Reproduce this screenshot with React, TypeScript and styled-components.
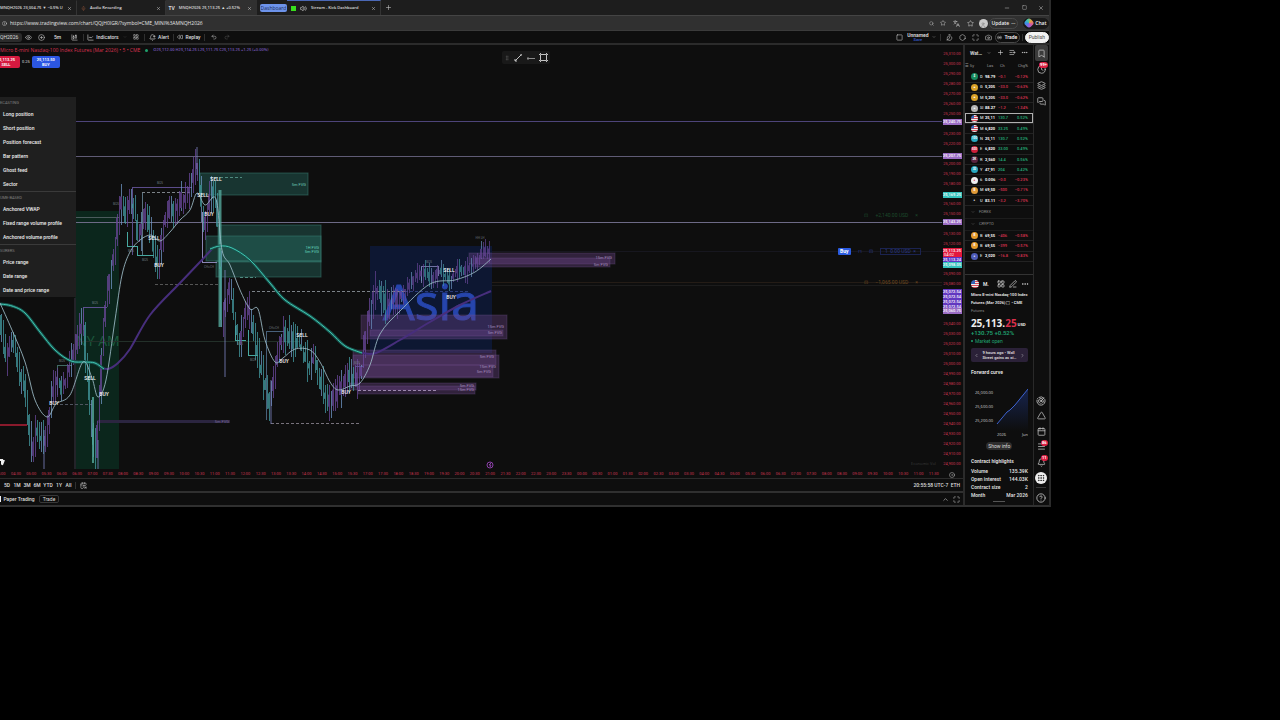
import React from "react";
import styled, { createGlobalStyle } from "styled-components";
import {
  Bell, BellPlus, Bookmark, Calendar, Camera, CalendarSync, ChartCandlestick, ChartLine, ChevronDown, ChevronLeft,
  ChevronRight, ChevronUp, Clock, CircleHelp, CirclePlus, Eye, GripVertical, Hexagon, Info, Layers, LayoutGrid,
  ListPlus, Maximize, Menu as MenuIcon, MessagesSquare, Minus, MoreHorizontal, PenLine, Plus, Radar, Radio, Redo2, Rewind, Search,
  Square, Star, TimerReset, Triangle, Undo2, User, Volume2, X, Grip, Mic, Languages, CircleDot,
} from "lucide-react";

const GlobalStyle = createGlobalStyle`
  *, *::before, *::after { box-sizing: border-box; }
  body {
    margin: 0;
    background: #000;
    color: #dedede;
    font: 5px/8px Roboto, "Liberation Sans", sans-serif;
  }
  button, input {
    margin: 0;
    padding: 0;
    border: 0;
    background: none;
    color: inherit;
    font: inherit;
  }
  svg { flex: none; display: block; }
`;

const Window = styled.main`
  width: 82.1%;
  overflow: hidden;
  background: #0e0e0e;
  border-right: 2px solid #2b2b2b;
  border-bottom: 2px solid #303030;
`;

/* Browser frame */
const TabBar = styled.header`
  display: flex;
  align-items: center;
  height: 15px;
  background: #1d1d1d;
  font-family: "Open Sans", "Liberation Sans", sans-serif;
  white-space: nowrap;
`;
const Tab = styled.div<{ $width: number; $active?: boolean; $grouped?: boolean }>`
  display: flex;
  align-items: center;
  gap: 4px;
  flex: none;
  width: ${(p) => p.$width}px;
  height: 15px;
  padding-right: 4px;
  background: ${(p) => (p.$active ? "#303030" : "transparent")};
  border-top: 1px solid ${(p) => (p.$grouped ? "#4b68b5" : "transparent")};
  border-right: 1px solid ${(p) => (p.$active ? "transparent" : "#333")};
`;
const TabTitle = styled.span`
  flex: 1;
  min-width: 0;
  font-size: 4px;
  font-weight: 600;
`;
const GroupLabel = styled.button`
  flex: none;
  width: 27px;
  height: 8px;
  margin-left: 3px;
  border-radius: 2px;
  background: #6d93ea;
  color: #1c2c58;
  line-height: 8px;
`;
const Favicon = styled.span<{ $color: string }>`
  flex: none;
  width: 5px;
  height: 5px;
  background: ${(p) => p.$color};
`;
const WindowButtons = styled.div`
  display: flex;
  align-items: center;
  margin-left: auto;
`;
const IconButton = styled.button<{ $width?: number; $dim?: boolean }>`
  display: flex;
  align-items: center;
  justify-content: center;
  flex: none;
  width: ${(p) => p.$width ?? 13}px;
  height: 12px;
  color: ${(p) => (p.$dim ? "#555" : "#c4c4c4")};
`;
const AddressBar = styled.div`
  display: flex;
  align-items: center;
  height: 16px;
  padding-left: 2px;
  background: #303030;
  border-top: 1px solid #444;
  border-bottom: 1px solid #3b3b3b;
  font-family: "Open Sans", "Liberation Sans", sans-serif;
`;
const Address = styled.input`
  flex: 1;
  min-width: 0;
  height: 10px;
  padding-left: 3px;
  outline: none;
  color: #e4e4e4;
`;
const Avatar = styled.span`
  display: flex;
  align-items: end;
  justify-content: center;
  width: 9px;
  height: 9px;
  margin: 0 1px 0 2px;
  border-radius: 50%;
  background: #c9c9c9;
  color: #777;
`;
const Pill = styled.button<{ $width: number; $tone?: "light" | "dark" | "outline" }>`
  display: flex;
  align-items: center;
  justify-content: center;
  gap: 2px;
  flex: none;
  width: ${(p) => p.$width}px;
  height: 11px;
  border: 1px solid ${(p) => (p.$tone === "light" ? "#f2f2f2" : p.$tone === "dark" ? "#191919" : "#484848")};
  border-radius: 6px;
  background: ${(p) => (p.$tone === "light" ? "#f2f2f2" : p.$tone === "dark" ? "#191919" : "transparent")};
  color: ${(p) => (p.$tone === "light" ? "#444" : "#eee")};
  font-weight: ${(p) => (p.$tone === "light" ? 400 : 600)};
  white-space: nowrap;
`;
const Copilot = styled.span`
  width: 8px;
  height: 8px;
  border-radius: 3px;
  background: conic-gradient(#e8a13b, #d95a9b, #8f63e0, #3d8be8, #3cc7b0, #e8a13b);
  transform: rotate(45deg);
`;

/* Page toolbar */
const Toolbar = styled.nav`
  display: flex;
  align-items: center;
  height: 14px;
  border-bottom: 2px solid #2b2b2b;
  white-space: nowrap;
`;
const SymbolBox = styled.button`
  width: 22px;
  height: 9px;
  background: #2b2b2b;
  border-radius: 0 3px 3px 0;
  text-align: left;
`;
const ToolButton = styled.button<{ $width: number }>`
  display: flex;
  align-items: center;
  justify-content: center;
  gap: 2px;
  flex: none;
  width: ${(p) => p.$width}px;
  height: 12px;
  font-weight: 500;
  white-space: nowrap;
`;
const Separator = styled.span`
  flex: none;
  width: 1px;
  height: 7px;
  margin: 0 2px;
  background: #303030;
`;
const Push = styled.span`
  flex: 1;
`;
const LayoutName = styled.button`
  width: 24px;
  font-weight: 600;
  line-height: 6px;
  text-align: center;
  small {
    display: block;
    color: #3558c8;
    font-size: 4px;
    line-height: 4px;
  }
`;

/* Body */
const Body = styled.div`
  display: flex;
`;
const ChartColumn = styled.section`
  display: flex;
  flex-direction: column;
  flex: 1;
  min-width: 0;
  border-right: 2px solid #2b2b2b;
`;
const ChartArea = styled.div`
  position: relative;
  display: flex;
  height: 424px;
`;
const Plot = styled.svg`
  flex: 1;
  min-width: 0;
  height: 424px;
`;
const Axis = styled.svg`
  width: 21px;
  height: 424px;
`;
const Legend = styled.div`
  position: absolute;
  top: 1px;
  left: 0;
  display: flex;
  align-items: center;
  gap: 5px;
  font-family: "Open Sans", "Liberation Sans", sans-serif;
  white-space: nowrap;
  color: #dc3351;
`;
const Dot = styled.i<{ $size: number }>`
  width: ${(p) => p.$size}px;
  height: ${(p) => p.$size}px;
  border-radius: 50%;
  background: #1fa06c;
`;
const Ohlc = styled.span`
  font-size: 4px;
  font-weight: 600;
  color: #7558bd;
`;
const TradeButtons = styled.div`
  position: absolute;
  top: 11px;
  left: -8px;
  display: flex;
  align-items: center;
  gap: 2px;
  font-size: 4px;
`;
const TradeButton = styled.button<{ $color: string }>`
  width: 28px;
  height: 12px;
  border-radius: 2px;
  background: ${(p) => p.$color};
  color: #fff;
  font-weight: 600;
  font-size: 4px;
  line-height: 5px;
  span { display: block; }
`;
const DrawingBar = styled.div`
  position: absolute;
  top: 6px;
  left: 502px;
  display: flex;
  align-items: center;
  width: 48px;
  height: 13px;
  border-radius: 2px;
  background: #191919;
`;
const OrderRow = styled.div<{ $top: number; $right: number; $color: string }>`
  position: absolute;
  top: ${(p) => p.$top}px;
  right: ${(p) => p.$right}px;
  display: flex;
  align-items: center;
  gap: 7px;
  color: ${(p) => p.$color};
`;
const BuyTag = styled.button`
  width: 13px;
  height: 7px;
  border-radius: 1px;
  background: #2b5be0;
  color: #fff;
  font-weight: 700;
  line-height: 7px;
`;
const OrderBox = styled.span`
  display: flex;
  justify-content: space-between;
  width: 41px;
  height: 7px;
  padding: 0 4px;
  border: 1px solid #1b2350;
  line-height: 5px;
`;
const Menu = styled.aside`
  position: absolute;
  top: 52px;
  left: 0;
  width: 76px;
  background: #1f1f1f;
`;
const MenuGroup = styled.div`
  & + & { border-top: 1px solid #3a3a3a; }
`;
const MenuHeading = styled.h3`
  height: 10px;
  margin: 0;
  padding-top: 2px;
  color: #808080;
  font-size: 4px;
  font-weight: 400;
`;
const MenuItem = styled.button`
  display: flex;
  align-items: center;
  width: 100%;
  height: 14px;
  padding-left: 3px;
  color: #eee;
  font-weight: 500;
  white-space: nowrap;
`;
const TimeAxis = styled.div`
  display: flex;
  height: 10px;
  overflow: hidden;
  border-bottom: 1px solid #2b2b2b;
`;
const TimeLabels = styled.div`
  display: flex;
  flex: 1;
  min-width: 0;
  margin-left: -7px;
  color: #cc3450;
  font: 4px/10px Roboto, sans-serif;
  text-align: center;
  span { flex: 1 0 0; min-width: 0; }
`;
const RangeBar = styled.div`
  display: flex;
  align-items: center;
  height: 12px;
  padding: 0 2px;
`;
const BottomBar = styled.div`
  display: flex;
  align-items: center;
  height: 14px;
  border-top: 2px solid #303030;
  padding: 0 1px;
`;
const OutlineButton = styled.button`
  width: 20px;
  height: 8px;
  margin-left: 3px;
  border: 1px solid #383838;
  border-radius: 2px;
  line-height: 6px;
`;
const BrokerMark = styled.span`
  width: 2px;
  height: 6px;
  margin: 0 1px 0 -2px;
  background: #eee;
`;

/* Side panel */
const Panel = styled.aside`
  flex: none;
  width: 69px;
  border-right: 1px solid #292929;
`;
const PanelHead = styled.div`
  display: flex;
  align-items: center;
  justify-content: space-between;
  height: 15px;
  padding: 0 5px;
  font-weight: 600;
`;
const Quotes = styled.table`
  width: 100%;
  height: 202px;
  border-collapse: collapse;
  table-layout: fixed;
  font-size: 4px;
  line-height: 8px;
  white-space: nowrap;
  td, th { padding: 0; text-align: left; }
`;
const HeadRow = styled.tr`
  height: 12px;
  color: #999;
  th { font-weight: 400; }
`;
const QuoteRow = styled.tr<{ $selected?: boolean }>`
  height: 10px;
  border-bottom: 1px solid #232323;
  outline: ${(p) => (p.$selected ? "1px solid #b0b0b0" : "none")};
  outline-offset: -1px;
  font-weight: 500;
`;
const SectionRow = styled.tr`
  height: 12px;
  color: #8a8a8a;
  border-bottom: 1px solid #1c1c1c;
`;
const SectionLabel = styled.span`
  display: flex;
  align-items: center;
  gap: 4px;
  padding-left: 6px;
`;
const Coin = styled.span<{ $color: string }>`
  display: flex;
  align-items: center;
  justify-content: center;
  width: 7px;
  height: 7px;
  margin-left: 6px;
  border-radius: 50%;
  background: ${(p) => p.$color};
  color: #fff;
  font-size: 3px;
  font-weight: 700;
  line-height: 7px;
`;
const Price = styled.td`
  color: #f4f4f4;
  font-weight: 700;
`;
const Change = styled.td<{ $up: boolean; $end?: boolean }>`
  color: ${(p) => (p.$up ? "#24b37c" : "#dd3350")};
  && {
    text-align: ${(p) => (p.$end ? "right" : "left")};
    padding-right: ${(p) => (p.$end ? 5 : 0)}px;
  }
`;
const PanelGap = styled.div`
  height: 13px;
  border-bottom: 1px solid #333;
`;
const Details = styled.div`
  padding: 3px 5px 0 6px;
`;
const DetailsHead = styled.div`
  display: flex;
  align-items: center;
  gap: 4px;
  height: 12px;
  margin-bottom: 1px;
  font-weight: 700;
`;
const Flag = styled.span<{ $size: number }>`
  display: block;
  flex: none;
  width: ${(p) => p.$size}px;
  height: ${(p) => p.$size}px;
  border-radius: 50%;
  background: linear-gradient(90deg, #3565b8 45%, transparent 45%) top / 100% 50% no-repeat,
    repeating-linear-gradient(#f0f0f0 0 1px, #d64a5a 1px 2px);
`;
const Description = styled.p`
  margin: 0;
  color: #e8e8e8;
  font-size: 4px;
  font-weight: 600;
  white-space: nowrap;
  small { display: block; color: #888; font-size: 4px; font-weight: 400; }
`;
const BigPrice = styled.div`
  display: flex;
  align-items: end;
  margin-top: 2px;
  font: 700 10px/12px "Open Sans", sans-serif;
  color: #eee;
  em { font-style: normal; color: #d92f4b; }
  small { margin-left: 1px; font-size: 4px; line-height: 8px; }
`;
const Positive = styled.div<{ $strong?: boolean }>`
  display: flex;
  align-items: center;
  gap: 2px;
  height: ${(p) => (p.$strong ? 8 : 7)}px;
  color: #20a06f;
  font-size: ${(p) => (p.$strong ? 6 : 5)}px;
  font-weight: ${(p) => (p.$strong ? 600 : 400)};
`;
const NewsCard = styled.div`
  display: flex;
  align-items: center;
  justify-content: space-between;
  height: 14px;
  margin: 4px 0 6px;
  padding: 0 3px;
  border-radius: 2px;
  background: #2b2138;
  font-size: 4px;
  font-weight: 600;
  line-height: 5px;
  white-space: nowrap;
`;
const Subtitle = styled.h2`
  margin: 0;
  font-size: 5px;
  font-weight: 700;
  line-height: 8px;
  white-space: nowrap;
`;
const Curve = styled.svg`
  width: 100%;
  height: 64px;
`;
const InfoButton = styled.button`
  display: block;
  width: 26px;
  height: 8px;
  margin: 2px auto 7px;
  border-radius: 4px;
  background: #2e2e2e;
  line-height: 8px;
`;
const Facts = styled.dl`
  display: grid;
  grid-template-columns: 1fr auto;
  margin: 2px 0 0;
  font-weight: 600;
  white-space: nowrap;
  dt, dd { margin: 0; }
  dd { text-align: right; }
`;
const Handle = styled.div`
  width: 12px;
  height: 1px;
  margin: 2px auto 0;
  background: #555;
`;

/* Icon rail */
const Rail = styled.nav`
  display: flex;
  flex-direction: column;
  align-items: center;
  flex: none;
  width: 15px;
`;
const RailButton = styled.button<{ $active?: boolean; $tall?: boolean }>`
  position: relative;
  display: flex;
  align-items: center;
  justify-content: center;
  flex: none;
  width: 13px;
  height: ${(p) => (p.$tall ? 16 : 15)}px;
  border-radius: 2px;
  background: ${(p) => (p.$active ? "#3b3b3b" : "transparent")};
  color: #c4c4c4;
`;
const Badge = styled.span`
  position: absolute;
  top: 1px;
  right: 0;
  min-width: 7px;
  height: 6px;
  padding: 0 1px;
  border-radius: 3px;
  background: #dc1f43;
  color: #fff;
  font-size: 4px;
  font-weight: 700;
  line-height: 6px;
`;
const Apps = styled.span`
  display: flex;
  align-items: center;
  justify-content: center;
  width: 12px;
  height: 12px;
  border-radius: 50%;
  background: #eee;
  color: #111;
`;
const RailRule = styled.span`
  width: 10px;
  height: 1px;
  margin: 2px 0;
  background: #383838;
`;

type Point = [number, number];

const PRICE: Point[] = [
  [0, 315], [3, 345], [7, 360], [12, 340], [16, 355], [20, 375], [25, 385], [28, 415], [32, 455], [36, 430], [42, 440],
  [45, 445], [48, 425], [52, 395], [57, 378], [62, 390], [66, 380], [70, 365], [75, 350], [80, 330], [84, 325], [86, 360],
  [89, 385], [92, 430], [96, 458], [98, 425], [101, 380], [103, 330], [106, 305], [110, 275], [115, 250], [118, 218],
  [122, 198], [126, 220], [130, 200], [135, 210], [138, 240], [141, 230], [145, 212], [150, 225], [154, 250], [158, 265],
  [162, 235], [166, 215], [170, 207], [175, 212], [180, 200], [185, 200], [190, 188], [195, 168], [198, 165], [201, 195],
  [204, 230], [207, 210], [212, 190], [216, 200], [219, 240], [222, 320], [226, 300], [230, 285], [235, 320], [240, 345],
  [245, 310], [250, 310], [255, 340], [260, 365], [265, 385], [270, 405], [275, 370], [280, 345], [283, 333], [290, 338],
  [300, 345], [305, 357], [310, 368], [315, 355], [320, 380], [327, 402], [333, 398], [340, 390], [348, 375], [355, 382],
  [361, 375], [364, 350], [367, 322], [371, 310], [374, 292], [379, 290], [385, 303], [392, 302], [400, 296], [410, 285],
  [417, 275], [425, 272], [432, 280], [440, 270], [450, 281], [458, 268], [465, 271], [475, 264], [482, 252], [491, 251],
];

const interpolate = (points: Point[], x: number) => {
  const i = Math.max(1, points.findIndex((p) => p[0] >= x));
  const [x0, y0] = points[i - 1];
  const [x1, y1] = points[i];
  return y0 + ((y1 - y0) * (x - x0)) / (x1 - x0);
};

/* Repeatable noise, so that the candles keep their shape on each render. */
const noise = (n: number) => {
  const v = Math.sin(n * 127.1) * 43758.5453;
  return v - Math.floor(v);
};

const CANDLES = Array.from({ length: 245 }, (_, i) => {
  const x = 1 + i * 2;
  const open = interpolate(PRICE, x - 1);
  const close = interpolate(PRICE, Math.min(491, x + 1));
  const calm = x > 400 ? 0.6 : 1;
  const body = (4 + noise(i + 3) * 14) * calm;
  const mid = (open + close) / 2;
  const half = Math.max(body, Math.abs(close - open)) / 2;
  return {
    x,
    top: mid - half,
    bottom: mid + half,
    high: mid - half - noise(i + 40) * 16 * calm,
    low: mid + half + noise(i + 90) * 16 * calm,
    down: close > open,
  };
});

const smooth = (p: Point[]) => {
  let d = `M${p[0][0]} ${p[0][1]}`;
  for (let i = 0; i < p.length - 1; i++) {
    const a = p[Math.max(0, i - 1)];
    const b = p[i];
    const c = p[i + 1];
    const e = p[Math.min(p.length - 1, i + 2)];
    d += ` C${b[0] + (c[0] - a[0]) / 6} ${b[1] + (c[1] - a[1]) / 6} ${c[0] - (e[0] - b[0]) / 6} ${c[1] - (e[1] - b[1]) / 6} ${c[0]} ${c[1]}`;
  }
  return d;
};

const FAST = smooth([
  [0, 303], [12, 330], [25, 362], [35, 400], [47, 417], [56, 404], [70, 395], [83, 362], [92, 378], [98, 397], [106, 380],
  [115, 320], [122, 275], [130, 252], [140, 240], [151, 235], [160, 241], [170, 232], [180, 220], [190, 210], [197, 193],
  [205, 205], [216, 199], [222, 250], [230, 265], [240, 290], [250, 309], [258, 309], [265, 340], [275, 362], [283, 358],
  [295, 349], [310, 350], [320, 362], [330, 382], [338, 390], [350, 386], [360, 383], [370, 365], [380, 334], [400, 311],
  [430, 284], [455, 280], [475, 272], [491, 259],
]);
const SLOW_TEAL = [
  smooth([[0, 304], [12, 306], [25, 313], [40, 332], [55, 350], [71, 361], [85, 362], [95, 363], [104, 369]]),
  smooth([[210, 249], [220, 246], [232, 248], [250, 260], [270, 283], [285, 300], [310, 316], [330, 332], [345, 346], [362, 353]]),
];
const SLOW_PURPLE = [
  smooth([[100, 367], [108, 369], [118, 363], [130, 349], [150, 315], [180, 283], [200, 262], [212, 249]]),
  smooth([[362, 353], [376, 353], [400, 340], [430, 322], [460, 305], [491, 291]]),
];

const GAPS_TEAL = [
  { x: 200, y: 173, w: 108, h: 22, o: 0.36 },
  { x: 218, y: 225, w: 103, h: 37, o: 0.34 },
  { x: 206, y: 236, w: 115, h: 25, o: 0.34 },
  { x: 216, y: 261, w: 105, h: 16, o: 0.36 },
];
const GAPS_PURPLE = [
  { x: 469, y: 253, w: 146, h: 11 },
  { x: 475, y: 258, w: 135, h: 9 },
  { x: 361, y: 315, w: 146, h: 24 },
  { x: 370, y: 330, w: 133, h: 6 },
  { x: 353, y: 350, w: 143, h: 15 },
  { x: 353, y: 355, w: 146, h: 23 },
  { x: 361, y: 365, w: 132, h: 12 },
  { x: 350, y: 383, w: 126, h: 7 },
  { x: 358, y: 386, w: 117, h: 8 },
];
const GAP_NOTES: [number, number, string, string][] = [
  [306, 186, "5m FVG", "#6fc9ba"], [319, 249, "1H FVG", "#63d3be"], [319, 253, "5m FVG", "#63d3be"],
  [612, 259, "15m FVG", "#a58cbe"], [608, 266, "5m FVG", "#a58cbe"], [504, 328, "15m FVG", "#a58cbe"],
  [502, 334, "5m FVG", "#a58cbe"], [494, 358, "5m FVG", "#a58cbe"], [496, 368, "15m FVG", "#a58cbe"],
  [491, 373, "5m FVG", "#a58cbe"], [474, 387, "5m FVG", "#a58cbe"], [474, 391, "15m FVG", "#a58cbe"],
  [229, 423, "5m FVG", "#7c6a9c"],
];
const SIGNALS: [number, number, string][] = [
  [216, 181, "SELL"], [203, 197, "SELL"], [209, 216, "BUY"], [154, 240, "SELL"], [159, 267, "BUY"], [90, 380, "SELL"],
  [104, 396, "BUY"], [54, 405, "BUY"], [302, 337, "SELL"], [284, 363, "BUY"], [346, 394, "BUY"], [449, 272, "SELL"],
  [451, 299, "BUY"],
];
const STRUCTURE: [string, string][] = [
  ["M132 255V187H192", "#5b4c8a"], ["M142 255V192", "#5a7280"], ["M127 232V246H137", "#47a8a0"], ["M137 246V255H154", "#47a8a0"],
  ["M202 212V262H217", "#8b86b5"], ["M83 330V307H107", "#5d5190"], ["M57 395V365H72", "#3f6a62"], ["M235 326V340H246", "#47a8a0"],
  ["M248 330V355H258", "#47a8a0"], ["M266 420V331H284", "#47607a"], ["M421 283V266H438V276", "#6f70a0"], ["M355 385V366H364", "#5d5190"],
];

const Drawing = () => (
  <Plot role="img" aria-label="Price chart">
    <g transform="translate(0 -45)" fontFamily="Open Sans, sans-serif">
      <rect x="75" y="211" width="44" height="258" fill="#0b261c" />
      <rect x="370" y="246" width="122" height="107" fill="#0d1732" />
      <text x="98" y="346" textAnchor="middle" fontSize="14" fill="#1c5a3e">NY AM</text>
      <text x="431" y="320" textAnchor="middle" fontSize="50" fill="#2645ac" stroke="#2645ac">Asia</text>
      <g shapeRendering="crispEdges">
        <line x1="76" x2="100%" y1="121" y2="121" stroke="#4d4479" />
        <line x1="76" x2="100%" y1="156" y2="156" stroke="#5f5b75" />
        <line x1="76" x2="100%" y1="222" y2="222" stroke="#6d6a86" />
        <line x1="76" x2="119" y1="217" y2="217" stroke="#4b5a5c" />
        <line x1="492" x2="100%" y1="251" y2="251" stroke="#17171f" />
        <line x1="492" x2="100%" y1="282" y2="282" stroke="#241c16" />
        <line x1="492" x2="100%" y1="285" y2="285" stroke="#1c1c1c" />
        <line x1="76" x2="300" y1="341" y2="341" stroke="#233029" />
        <rect x="0" y="424" width="27" height="2" fill="#8a1a2c" />
        <rect x="97" y="420" width="133" height="3" fill="#2b2540" />
        <rect x="74" y="298" width="2" height="171" fill="#232329" />
      </g>
      {GAPS_TEAL.map((g, i) => (
        <rect key={i} x={g.x} y={g.y} width={g.w} height={g.h} fill="#2d7d72" fillOpacity={g.o} stroke="#3a8076" strokeOpacity="0.5" />
      ))}
      {GAPS_PURPLE.map((g, i) => (
        <rect key={i} x={g.x} y={g.y} width={g.w} height={g.h} fill="#6b4488" fillOpacity="0.38" stroke="#7f60a0" strokeOpacity="0.25" />
      ))}
      <g fill="none" shapeRendering="crispEdges">
        {STRUCTURE.map(([d, color], i) => <path key={i} d={d} stroke={color} />)}
      </g>
      <g fill="none" stroke="#7c8288" strokeDasharray="3 2" shapeRendering="crispEdges">
        <path d="M142 192H190" />
        <path d="M210 177H242" stroke="#4f8a80" />
        <path d="M155 284H218" stroke="#555" />
        <path d="M252 291H405" />
        <path d="M405 291H470" stroke="#2c3c78" />
        <path d="M271 423H360" stroke="#77727c" />
        <path d="M60 404H92" stroke="#4e5560" />
        <path d="M358 390H436" stroke="#9b86ad" />
        <path d="M240 277H256" stroke="#4f8a80" />
      </g>
      {CANDLES.map((c, i) => {
        const color = c.down ? "#449ca2" : "#6b489c";
        return (
          <g key={i} stroke={i % 5 === 0 ? "#6f97c6" : color} fill={color} opacity={c.x > 370 ? 0.65 : 0.75}>
            <line x1={c.x} x2={c.x} y1={c.high} y2={c.low} strokeWidth="1" shapeRendering="crispEdges" />
            {i % 2 === 0 && <rect x={c.x - 1} y={c.top} width="2" height={c.bottom - c.top} stroke="none" />}
          </g>
        );
      })}
      <g stroke="#54a89c" strokeWidth="3" opacity="0.8">
        <path d="M220 190V327" />
        <path d="M93 397V463" strokeWidth="2" />
      </g>
      <g stroke="#7c84c4" opacity="0.8">
        <path d="M197 147V175M44 430V469M98 440V469M225 270V377M271 380V424" />
      </g>
      {SLOW_PURPLE.map((d, i) => <path key={i} d={d} fill="none" stroke="#472e7c" strokeWidth="2" />)}
      {SLOW_TEAL.map((d, i) => (
        <g key={i} fill="none">
          <path d={d} stroke="#17564f" strokeWidth="3" />
          <path d={d} stroke="#43c9b4" strokeWidth="1" />
        </g>
      ))}
      <path d={FAST} fill="none" stroke="#9dbcc8" strokeWidth="1" opacity="0.85" />
      <g fontFamily="Roboto, sans-serif" fontSize="4" textAnchor="end">
        {GAP_NOTES.map(([x, y, text, color], i) => <text key={i} x={x} y={y} fill={color}>{text}</text>)}
      </g>
      <g fontFamily="Roboto, sans-serif" fontSize="5" fontWeight="500" textAnchor="middle" fill="#f6f6f6">
        {SIGNALS.map(([x, y, text], i) => <text key={i} x={x} y={y}>{text}</text>)}
      </g>
      <g fontSize="3" textAnchor="middle" fill="#77808a">
        <text x="160" y="184">BOS</text><text x="116" y="205">BOS</text><text x="145" y="261">BOS</text>
        <text x="209" y="268">CHoCH</text><text x="131" y="252">BOS</text><text x="95" y="304">BOS</text>
        <text x="62" y="362">BOS</text><text x="240" y="345">BOS</text><text x="253" y="361">BOS</text>
        <text x="274" y="329">CHoCH</text><text x="429" y="263">BOS</text><text x="357" y="364">BOS</text>
        <text x="480" y="239">HH LH</text>
      </g>
      <g fill="none" stroke="#8a3fa8">
        <circle cx="490" cy="465" r="3" />
        <path d="M491 463l-2 2h2l-1 2" />
      </g>
      <path d="M0 460h2v4M2 465l2-5" fill="none" stroke="#eee" strokeWidth="2" />
      <svg x="100%" y="0" overflow="visible">
        <text x="-6" y="465" fontSize="4" textAnchor="end" fill="#3a3a3a">Economic   Vol</text>
      </svg>
    </g>
  </Plot>
);

const AXIS_VALUES = Array.from({ length: 42 }, (_, i) => ({
  y: 55 + i * 10,
  text: (25310 - i * 10).toLocaleString("en-US") + ".00",
}));
const AXIS_TAGS = [
  { y: 119, h: 6, text: "25,240.75", fill: "#9a6cc4" },
  { y: 153, h: 6, text: "25,207.75", fill: "#9a6cc4" },
  { y: 192, h: 6, text: "25,169.25", fill: "#35c3bd" },
  { y: 219, h: 6, text: "25,143.25", fill: "#9a6cc4" },
  { y: 248, h: 10, text: "25,113.25", fill: "#e3173c" },
  { y: 257, h: 5, text: "25,113.24", fill: "#5b34c4" },
  { y: 262, h: 6, text: "25,098.05", fill: "#35c3bd" },
  { y: 289, h: 5, text: "25,072.54", fill: "#6238c0" },
  { y: 294, h: 5, text: "25,072.54", fill: "#6238c0" },
  { y: 299, h: 5, text: "25,072.54", fill: "#6238c0" },
  { y: 304, h: 5, text: "25,072.54", fill: "#6238c0" },
  { y: 308, h: 6, text: "25,060.75", fill: "#9a6cc4" },
];

const PriceAxis = () => (
  <Axis aria-label="Price scale">
    <g transform="translate(0 -45)" fontFamily="Roboto, sans-serif" fontSize="4" textAnchor="middle">
      {AXIS_VALUES.filter((v) => !AXIS_TAGS.some((t) => v.y > t.y - 1 && v.y - 4 < t.y + t.h)).map((v) => (
        <text key={v.y} x="10" y={v.y} fill="#cc3450">{v.text}</text>
      ))}
      {AXIS_TAGS.map((t) => (
        <g key={t.y}>
          <rect x="1" y={t.y} width="19" height={t.h} fill={t.fill} />
          <text x="10" y={t.y + 4} fill="#fff" fontWeight="500">{t.text}</text>
        </g>
      ))}
      <text x="7" y="256" fill="#fff">04:02</text>
    </g>
  </Axis>
);

const TIMES = Array.from({ length: 62 }, (_, i) => {
  const minutes = (240 + i * 30 + (i >= 24 ? 60 : 0)) % 1440;
  return `${String(Math.floor(minutes / 60)).padStart(2, "0")}:${minutes % 60 ? "30" : "00"}`;
});

const MENU = [
  { heading: "ECASTING", items: ["Long position", "Short position", "Position forecast", "Bar pattern", "Ghost feed", "Sector"] },
  { heading: "UME-BASED", items: ["Anchored VWAP", "Fixed range volume profile", "Anchored volume profile"] },
  { heading: "SURERS", items: ["Price range", "Date range", "Date and price range"] },
];

type Quote = { mark: string; color: string; name: string; price: string; change: string; percent: string; flag?: boolean };
const q = (mark: string, color: string, name: string, price: string, change: string, percent: string, flag = false): Quote =>
  ({ mark, color, name, price, change, percent, flag });

const MAIN: Quote[] = [
  q("$", "#168a5e", "D", "98.79", "−0.1", "−0.12%"),
  q("▲", "#d9a128", "G", "5,205", "−33.0", "−0.63%"),
  q("▲", "#d9a128", "M", "5,205", "−33.0", "−0.62%"),
  q("▲", "#b5b5b5", "SI", "88.27", "−1.2", "−1.34%"),
  q("", "#fff", "M", "25,11", "130.7", "0.52%", true),
  q("", "#fff", "M", "6,820", "33.25", "0.49%", true),
  q("100", "#28a8c0", "N", "25,11", "130.7", "0.52%"),
  q("500", "#cf1f3a", "E", "6,820", "33.00", "0.49%"),
  q("2K", "#5a2440", "R", "2,560", "14.4", "0.56%"),
  q("30", "#28a8c0", "Y", "47,91", "204", "0.42%"),
  q("●", "#f0f0f0", "6", "0.006", "−0.0", "−0.23%"),
  q("B", "#e09a38", "M", "69,50", "−500", "−0.71%"),
  q("♦", "#111", "U", "83.11", "−3.2", "−3.70%"),
];
const CRYPTO: Quote[] = [
  q("B", "#e59a2c", "B", "69,55", "−406", "−0.58%"),
  q("B", "#e59a2c", "B", "69,55", "−399", "−0.57%"),
  q("♦", "#4e5cb8", "E", "2,020", "−16.8", "−0.83%"),
];

const QuoteLine = ({ quote, selected }: { quote: Quote; selected?: boolean }) => {
  const up = !quote.percent.startsWith("−");
  return (
    <QuoteRow $selected={selected}>
      <td>{quote.flag ? <Coin $color="transparent"><Flag $size={7} /></Coin> : <Coin $color={quote.color} style={{ color: quote.mark === "●" ? "#d02440" : undefined }}>{quote.mark}</Coin>}</td>
      <td>{quote.name}</td>
      <Price>{quote.price}</Price>
      <Change $up={up}>{quote.change}</Change>
      <Change $up={up} $end>{quote.percent}</Change>
    </QuoteRow>
  );
};

const FACTS = [["Volume", "135.39K"], ["Open interest", "144.03K"], ["Contract size", "2"], ["Month", "Mar 2026"]];

const SidePanel = () => (
  <Panel>
    <PanelHead>
      <span>Wat…</span><ChevronDown size={4} /><Plus size={7} /><ListPlus size={7} /><MoreHorizontal size={7} />
    </PanelHead>
    <Quotes>
      <colgroup><col style={{ width: 15 }} /><col style={{ width: 5 }} /><col style={{ width: 13 }} /><col style={{ width: 13 }} /><col /></colgroup>
      <thead>
        <HeadRow><th colSpan={2}>☰ Sy</th><th>&nbsp;&nbsp;Las</th><th>&nbsp;&nbsp;Ch</th><th style={{ textAlign: "right", paddingRight: 5 }}>Chg%</th></HeadRow>
      </thead>
      <tbody>
        {MAIN.map((item, i) => <QuoteLine key={i} quote={item} selected={i === 4} />)}
        <SectionRow><td colSpan={5}><SectionLabel><ChevronDown size={4} />FOREX</SectionLabel></td></SectionRow>
        <SectionRow><td colSpan={5}><SectionLabel><ChevronDown size={4} />CRYPTO</SectionLabel></td></SectionRow>
        {CRYPTO.map((item, i) => <QuoteLine key={i} quote={item} />)}
      </tbody>
    </Quotes>
    <PanelGap />
    <Details>
      <DetailsHead>
        <Flag $size={8} />M.<Push /><LayoutGrid size={8} /><PenLine size={8} /><MoreHorizontal size={8} />
      </DetailsHead>
      <Description>
        Micro E-mini Nasdaq-100 Index<br />Futures (Mar 2026) ⬚ • CME<small>Futures</small>
      </Description>
      <BigPrice>25,113.<em>25</em><small>USD</small></BigPrice>
      <Positive $strong>+130.75 +0.52%</Positive>
      <Positive><Dot $size={2} />Market open</Positive>
      <NewsCard>
        <ChevronLeft size={5} /><span>9 hours ago • Wall<br />Street gains as oi…</span><ChevronRight size={5} />
      </NewsCard>
      <Subtitle>Forward curve</Subtitle>
      <Curve role="img" aria-label="Forward curve">
        <defs>
          <linearGradient id="fill" x1="0" x2="0" y1="0" y2="1">
            <stop offset="0" stopColor="#1d3580" stopOpacity="0.55" /><stop offset="1" stopColor="#1d3580" stopOpacity="0" />
          </linearGradient>
        </defs>
        <g fontFamily="Open Sans, sans-serif" fontSize="4" fill="#ccc">
          <text x="4" y="18">26,000.00</text><text x="4" y="32">25,600.00</text><text x="4" y="46">25,200.00</text>
          <text x="26" y="60">2026</text><text x="51" y="60">Jun</text>
        </g>
        <path d="M26 48L36 36L44 29L57 13V55H26Z" fill="url(#fill)" />
        <path d="M26 48L36 36L39 34L44 29L57 13" fill="none" stroke="#3d62cf" />
      </Curve>
      <InfoButton>Show info</InfoButton>
      <Subtitle>Contract highlights</Subtitle>
      <Facts>
        {FACTS.map(([name, value]) => <React.Fragment key={name}><dt>{name}</dt><dd>{value}</dd></React.Fragment>)}
      </Facts>
      <Handle />
    </Details>
  </Panel>
);

export default function App() {
  return (
    <>
      <GlobalStyle />
      <Window>
        <TabBar>
          <Tab $width={77}><TabTitle>MNQH2026 23,004.75 ▼ −0.5% U</TabTitle><X size={5} /></Tab>
          <Tab $width={89}><span /><Mic size={5} color="#8a5038" /><TabTitle>Audio Recording</TabTitle><X size={5} /></Tab>
          <Tab $width={91} $active><b>&nbsp;&nbsp;TV</b><TabTitle>MNQH2026 25,113.25 ▲ +0.52%</TabTitle><X size={5} /></Tab>
          <GroupLabel>Dashboard</GroupLabel>
          <Tab $width={94} $grouped>
            <span /><Favicon $color="#38e01c" /><Volume2 size={7} /><TabTitle>Stream - Kick Dashboard</TabTitle><X size={5} />
          </Tab>
          <IconButton aria-label="New tab" $width={15}><Plus size={7} /></IconButton>
          <WindowButtons>
            <IconButton aria-label="Minimise" $width={17}><Minus size={6} /></IconButton>
            <IconButton aria-label="Restore" $width={18}><Square size={5} /></IconButton>
            <IconButton aria-label="Close" $width={15}><X size={6} /></IconButton>
          </WindowButtons>
        </TabBar>
        <AddressBar>
          <Info size={5} />
          <Address aria-label="Address" defaultValue="https://www.tradingview.com/chart/QQjH0IGR/?symbol=CME_MINI%3AMNQH2026" />
          <IconButton aria-label="Zoom" $width={11}><Search size={5} /></IconButton>
          <IconButton aria-label="Favourite" $width={12}><Star size={6} /></IconButton>
          <IconButton aria-label="Translate" $width={16}><Languages size={7} /></IconButton>
          <IconButton aria-label="Favourites" $width={12}><Star size={7} /></IconButton>
          <Avatar><User size={6} /></Avatar>
          <Pill $width={29}>Update <span>···</span></Pill>
          <Separator />
          <Pill $width={26} $tone="dark"><Copilot />Chat</Pill>
        </AddressBar>
        <Toolbar>
          <SymbolBox>QH2026</SymbolBox>
          <IconButton aria-label="Watch"><Eye size={7} /></IconButton>
          <IconButton aria-label="Compare"><CirclePlus size={7} /></IconButton>
          <ToolButton $width={19}>5m</ToolButton>
          <IconButton aria-label="Candles" $width={14}><ChartCandlestick size={7} /></IconButton>
          <Separator />
          <ToolButton $width={34}><ChartLine size={7} />Indicators</ToolButton>
          <IconButton aria-label="More indicators" $width={10} $dim><ChevronDown size={4} /></IconButton>
          <IconButton aria-label="Templates" $width={12}><LayoutGrid size={6} /></IconButton>
          <Separator />
          <ToolButton $width={24}><BellPlus size={7} />Alert</ToolButton>
          <Separator />
          <ToolButton $width={26}><Rewind size={6} />Replay</ToolButton>
          <Separator />
          <IconButton aria-label="Undo"><Undo2 size={6} /></IconButton>
          <IconButton aria-label="Redo" $dim><Redo2 size={6} /></IconButton>
          <Push />
          <IconButton aria-label="Layout"><Square size={7} /></IconButton>
          <LayoutName>Unnamed<small>Save</small></LayoutName>
          <IconButton aria-label="Layouts" $width={8}><ChevronDown size={4} /></IconButton>
          <Separator />
          <IconButton aria-label="Quick search"><TimerReset size={7} /></IconButton>
          <IconButton aria-label="Settings"><Hexagon size={7} /></IconButton>
          <IconButton aria-label="Fullscreen"><Maximize size={7} /></IconButton>
          <IconButton aria-label="Snapshot"><Camera size={7} /></IconButton>
          <Pill $width={25} $tone="outline"><Radio size={5} />Trade</Pill>
          <Separator />
          <Pill $width={24} $tone="light">Publish</Pill>
        </Toolbar>
        <Body>
          <ChartColumn>
            <ChartArea>
              <Drawing />
              <PriceAxis />
              <Legend>
                <span>Micro E-mini Nasdaq-100 Index Futures (Mar 2026) • 5 • CME</span><Dot $size={3} />
                <Ohlc>O25,112.00 H25,114.25 L25,111.75 C25,113.25 +1.25 (+0.00%)</Ohlc>
              </Legend>
              <TradeButtons>
                <TradeButton $color="#d5193f"><span>25,113.25</span>SELL</TradeButton>0.25
                <TradeButton $color="#2b56e2"><span>25,113.50</span>BUY</TradeButton>
              </TradeButtons>
              <DrawingBar>
                <IconButton aria-label="Move" $width={9} $dim><GripVertical size={6} /></IconButton>
                <IconButton aria-label="Trend line">
                  <svg width="8" height="8" fill="none" stroke="currentColor"><path d="M1 7L7 1M0 6h2v2M6 0h2v2" /></svg>
                </IconButton>
                <IconButton aria-label="Ray">
                  <svg width="8" height="8" fill="none" stroke="#8a8a8a"><path d="M0 4.5h8M1 3v3" /></svg>
                </IconButton>
                <IconButton aria-label="Rectangle">
                  <svg width="9" height="9" fill="none" stroke="currentColor"><path d="M1.500 1.500h6v6h-6zM0 1.500h1M1.500 0v1M8 1.500h1M7.500 0v1M0 7.500h1M1.500 8v1M8 7.500h1M7.500 8v1" /></svg>
                </IconButton>
              </DrawingBar>
              <OrderRow $top={166} $right={45} $color="#1c4a2c"><span>⊡</span><span>+2,140.00 USD</span><span>×</span></OrderRow>
              <OrderRow $top={202} $right={42} $color="#2a3a88">
                <BuyTag>Buy</BuyTag><span>⊓</span><span>⊡</span><OrderBox><span>1</span><span>0.00 USD</span><span>×</span></OrderBox>
              </OrderRow>
              <OrderRow $top={233} $right={45} $color="#704820"><span>⊡</span><span>−1,065.00 USD</span><span>×</span></OrderRow>
              <Menu>
                {MENU.map((group) => (
                  <MenuGroup key={group.heading}>
                    <MenuHeading>{group.heading}</MenuHeading>
                    {group.items.map((item) => <MenuItem key={item}>{item}</MenuItem>)}
                  </MenuGroup>
                ))}
              </Menu>
            </ChartArea>
            <TimeAxis>
              <TimeLabels>{TIMES.map((t, i) => <span key={i}>{t}</span>)}</TimeLabels>
              <IconButton aria-label="Scale settings" $width={21}><CircleDot size={6} /></IconButton>
            </TimeAxis>
            <RangeBar>
              {["5D", "1M", "3M", "6M"].map((r) => <ToolButton key={r} $width={10}>{r}</ToolButton>)}
              <ToolButton $width={12}>YTD</ToolButton>
              <ToolButton $width={10}>1Y</ToolButton>
              <ToolButton $width={9}>All</ToolButton>
              <Separator />
              <IconButton aria-label="Go to date" $width={11}><CalendarSync size={7} /></IconButton>
              <Push />
              <ToolButton $width={38}>20:55:58 UTC-7</ToolButton>
              <ToolButton $width={11}>ETH</ToolButton>
            </RangeBar>
            <BottomBar>
              <BrokerMark />
              <ToolButton $width={34}>Paper Trading</ToolButton>
              <OutlineButton>Trade</OutlineButton>
              <Push />
              <IconButton aria-label="Open panel"><ChevronUp size={7} /></IconButton>
              <IconButton aria-label="Maximise panel" $width={10}><Maximize size={7} /></IconButton>
            </BottomBar>
          </ChartColumn>
          <SidePanel />
          <Rail>
            <RailButton $tall $active aria-label="Watchlist"><Bookmark size={9} /></RailButton>
            <RailButton $tall aria-label="Alerts"><Clock size={9} /><Badge>99+</Badge></RailButton>
            <RailButton $tall aria-label="Layers"><Layers size={9} /></RailButton>
            <RailButton $tall aria-label="Chats"><MessagesSquare size={9} /></RailButton>
            <Push />
            <RailButton aria-label="Screener"><Radar size={10} /></RailButton>
            <RailButton aria-label="Pine"><Triangle size={9} /></RailButton>
            <RailButton $tall aria-label="Calendar"><Calendar size={9} /></RailButton>
            <RailButton aria-label="News"><MenuIcon size={9} /><Badge>86</Badge></RailButton>
            <RailButton $tall aria-label="Notifications"><Bell size={9} /><Badge>11</Badge></RailButton>
            <RailButton aria-label="Products"><Apps><Grip size={8} /></Apps></RailButton>
            <RailRule />
            <RailButton aria-label="Help"><CircleHelp size={10} /></RailButton>
          </Rail>
        </Body>
      </Window>
    </>
  );
}
